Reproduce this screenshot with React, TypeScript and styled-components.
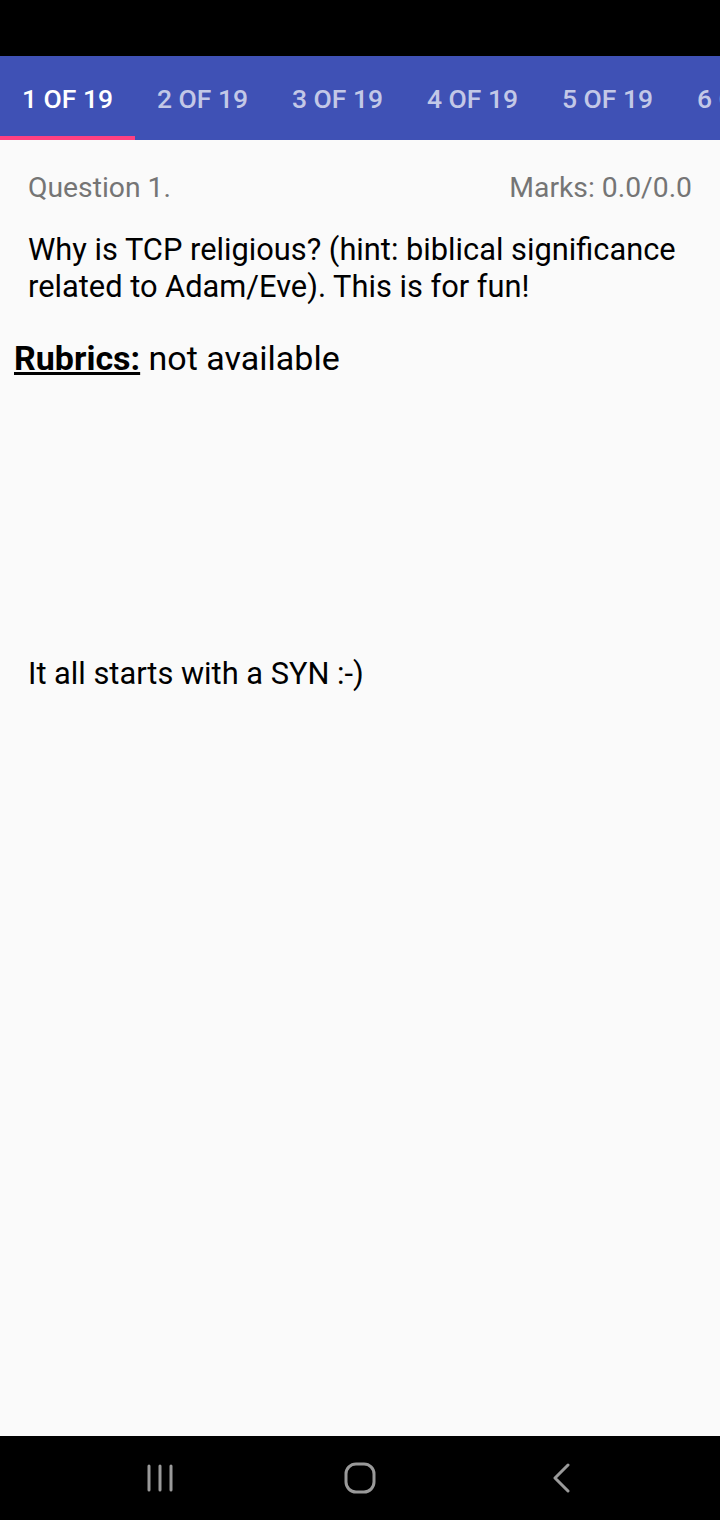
import styled, { createGlobalStyle } from "styled-components";

const TABS = Array.from({ length: 19 }, (_, i) => `${i + 1} OF 19`);

const GlobalStyle = createGlobalStyle`
  html, body {
    margin: 0;
    padding: 0;
    background: #000;
  }
  body {
    font-family: Roboto, "Noto Sans", sans-serif;
  }
`;

const App = () => {
  return (
    <StyledScreen>
      <GlobalStyle />
      <StyledStatusBar />
      <StyledTabBar>
        {TABS.map((label, i) => (
          <StyledTab key={label} active={i === 0}>
            {label}
          </StyledTab>
        ))}
      </StyledTabBar>
      <StyledBody>
        <StyledHeaderRow>
          <StyledMeta>Question 1.</StyledMeta>
          <StyledMeta>Marks: 0.0/0.0</StyledMeta>
        </StyledHeaderRow>
        <StyledQuestion>
          Why is TCP religious? (hint: biblical significance related to
          Adam/Eve). This is for fun!
        </StyledQuestion>
        <StyledRubrics>
          <b>Rubrics:</b> not available
        </StyledRubrics>
        <StyledAnswer>It all starts with a SYN :-)</StyledAnswer>
      </StyledBody>
      <StyledNavBar>
        <svg width="28" height="30" viewBox="0 0 28 30">
          <g stroke="#9a9a9a" strokeWidth="3" strokeLinecap="round">
            <line x1="3" y1="3" x2="3" y2="27" />
            <line x1="14" y1="3" x2="14" y2="27" />
            <line x1="25" y1="3" x2="25" y2="27" />
          </g>
        </svg>
        <svg width="32" height="32" viewBox="0 0 32 32">
          <rect
            x="2"
            y="2"
            width="28"
            height="28"
            rx="10"
            fill="none"
            stroke="#9a9a9a"
            strokeWidth="3"
          />
        </svg>
        <StyledBackIcon width="20" height="30" viewBox="0 0 20 30">
          <polyline
            points="16,2 3,15 16,28"
            fill="none"
            stroke="#9a9a9a"
            strokeWidth="3"
            strokeLinecap="round"
            strokeLinejoin="round"
          />
        </StyledBackIcon>
      </StyledNavBar>
    </StyledScreen>
  );
};

const StyledScreen = styled.div`
  width: 720px;
  height: 1520px;
  display: flex;
  flex-direction: column;
  background: #fafafa;
  overflow: hidden;
`;

const StyledStatusBar = styled.div`
  height: 56px;
  flex-shrink: 0;
  background: #000;
`;

const StyledTabBar = styled.div`
  height: 84px;
  flex-shrink: 0;
  display: flex;
  background: #3f51b5;
  overflow: hidden;
`;

const StyledTab = styled.div<{ active?: boolean }>`
  width: 135px;
  flex-shrink: 0;
  display: flex;
  align-items: center;
  justify-content: center;
  box-sizing: border-box;
  padding-top: 4px;
  font-size: 26.5px;
  font-weight: 500;
  white-space: nowrap;
  color: ${(p) => (p.active ? "#ffffff" : "rgba(255, 255, 255, 0.7)")};
  border-bottom: 4px solid ${(p) => (p.active ? "#ff4081" : "transparent")};
`;

const StyledBody = styled.div`
  flex: 1;
  padding: 30px 14px 0;
`;

const StyledHeaderRow = styled.div`
  display: flex;
  justify-content: space-between;
  padding: 0 14px;
  line-height: 36px;
`;

const StyledMeta = styled.span`
  font-size: 28.3px;
  color: #757575;
`;

const StyledQuestion = styled.p`
  margin: 25px 0 0 14px;
  padding-right: 8px;
  font-size: 30.8px;
  line-height: 37px;
  color: #000;
`;

const StyledRubrics = styled.p`
  margin: 33px 0 0 0;
  font-size: 34px;
  line-height: 40px;
  color: #000;

  b {
    font-weight: 700;
    text-decoration: underline;
  }
`;

const StyledAnswer = styled.p`
  margin: 276px 0 0 14px;
  font-size: 30.8px;
  line-height: 40px;
  color: #000;
`;

const StyledNavBar = styled.div`
  height: 84px;
  flex-shrink: 0;
  display: grid;
  grid-template-columns: repeat(3, 200px);
  align-items: center;
  justify-items: center;
  background: #000;
  padding: 0 60px;
`;

const StyledBackIcon = styled.svg`
  margin-left: 4px;
`;

export default App;
